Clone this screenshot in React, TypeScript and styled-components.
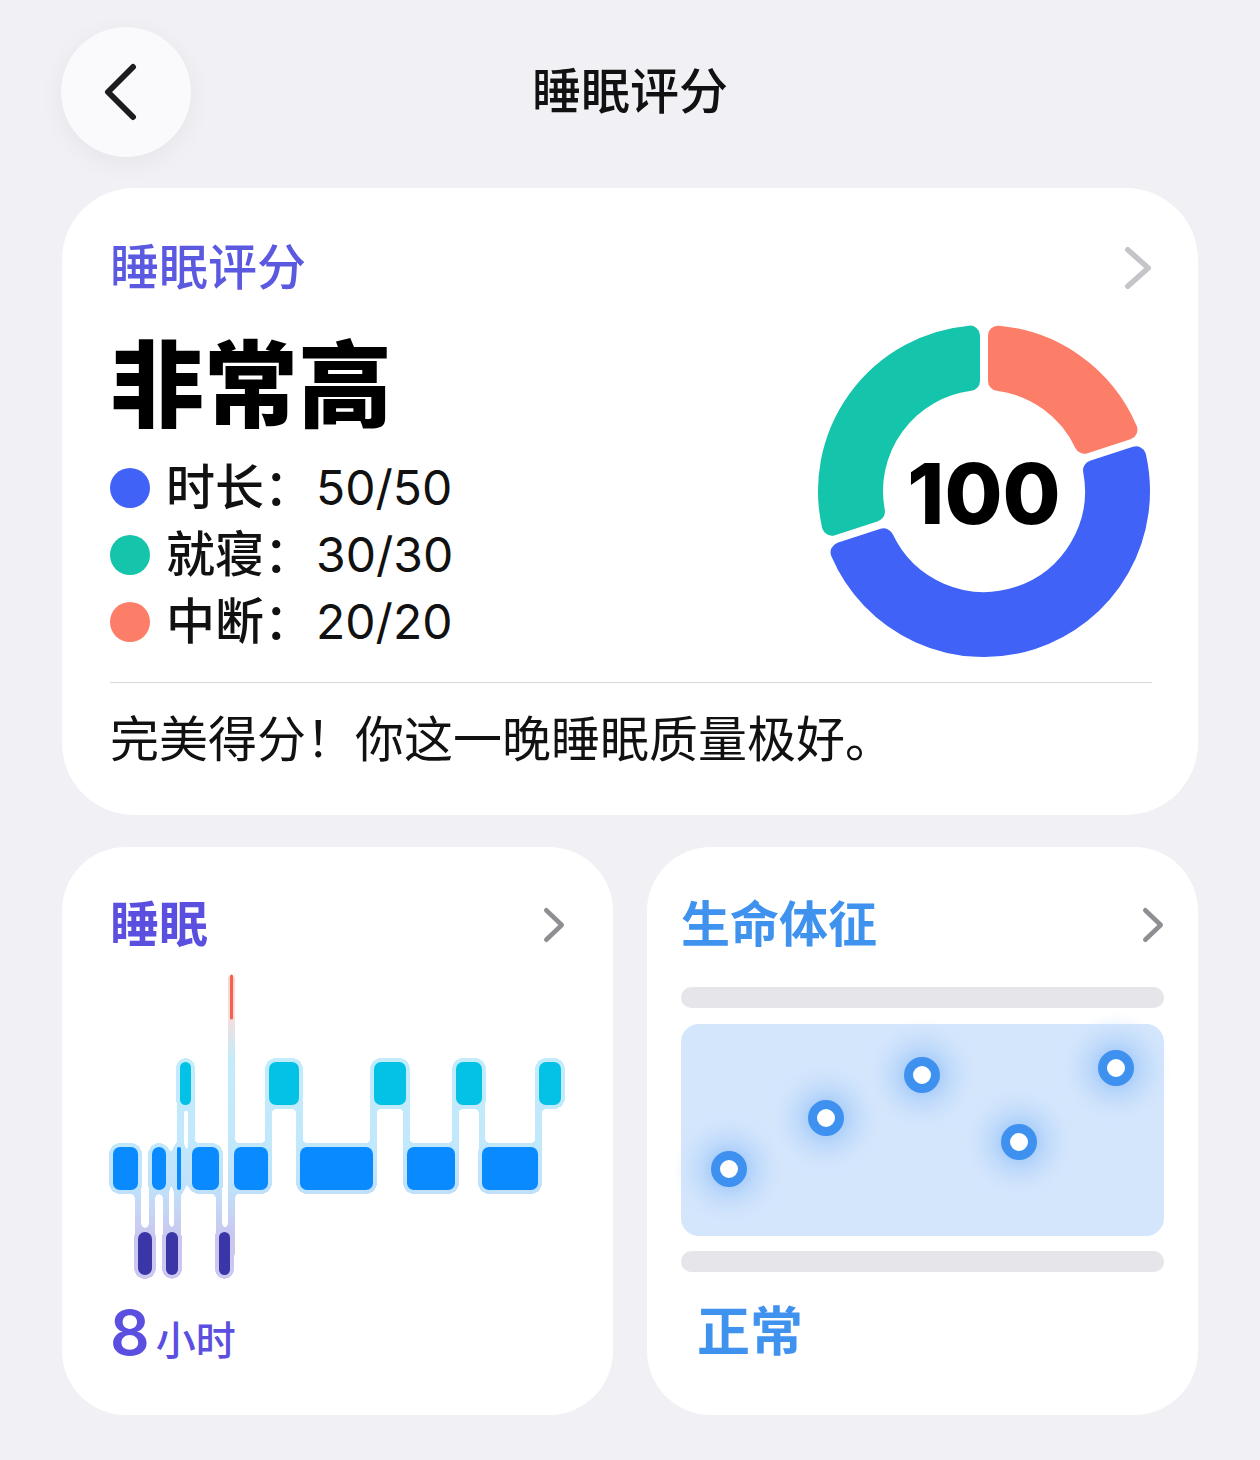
import React from 'react';
import styled, { createGlobalStyle } from 'styled-components';

const GlobalStyle = createGlobalStyle`
  html, body {
    margin: 0;
    background: #f0f0f5;
  }
  body {
    font-family: Inter, "Noto Sans CJK SC", sans-serif;
    color: #111;
    -webkit-font-smoothing: antialiased;
  }
`;

const Page = styled.div`
  width: 1260px;
  min-height: 1460px;
  box-sizing: border-box;
  padding: 27px 62px 40px;
  background: #f0f0f5;
`;

const Header = styled.header`
  display: grid;
  grid-template-columns: 130px 1fr 130px;
  align-items: center;
  height: 130px;
  margin-bottom: 31px;
`;

const BackButton = styled.button`
  width: 130px;
  height: 130px;
  margin-left: -1px;
  border: none;
  border-radius: 50%;
  background: #fafafd;
  box-shadow: 0 6px 26px rgba(0, 0, 0, 0.05);
  display: flex;
  align-items: center;
  justify-content: center;
  padding: 0;
  cursor: pointer;

  svg {
    margin-right: 11px;
  }
`;

const PageTitle = styled.h1`
  margin: 0;
  text-align: center;
  font-size: 49px;
  line-height: 58px;
  font-weight: 500;
  color: #111;
`;

const ScoreCard = styled.section`
  background: #fff;
  border-radius: 72px;
  padding: 51px 46px 46px 48px;
`;

const CardHead = styled.div`
  display: flex;
  align-items: center;
  justify-content: space-between;
  height: 58px;
`;

const CardTitle = styled.h2<{ $color: string; $weight?: number }>`
  margin: 0;
  font-size: 49px;
  line-height: 58px;
  font-weight: ${(p) => p.$weight ?? 600};
  color: ${(p) => p.$color};
`;

const ScoreBody = styled.div`
  display: flex;
  justify-content: space-between;
  align-items: flex-start;
  margin-top: 26px;
`;

const ScoreInfo = styled.div`
  margin-top: 13px;
`;

const Rating = styled.div`
  font-size: 94px;
  line-height: 100px;
  font-weight: 900;
  color: #000;
`;

const Legend = styled.ul`
  list-style: none;
  margin: 18px 0 0;
  padding: 0;
`;

const LegendRow = styled.li`
  display: flex;
  align-items: center;
  height: 67px;
`;

const Dot = styled.span<{ $color: string }>`
  width: 40px;
  height: 40px;
  border-radius: 50%;
  background: ${(p) => p.$color};
  margin-right: 16px;
  flex-shrink: 0;
`;

const LegendLabel = styled.span`
  font-size: 49px;
  line-height: 58px;
  font-weight: 500;
  color: #111;
`;

const LegendValue = styled.span`
  margin-left: 3px;
  font-size: 48px;
  line-height: 58px;
  font-weight: 400;
  color: #111;
`;

const Divider = styled.hr`
  border: none;
  height: 1px;
  background: #d9d9dc;
  margin: 23px 0 0;
`;

const Summary = styled.p`
  margin: 28px 0 0;
  font-size: 49px;
  line-height: 58px;
  font-weight: 400;
  color: #111;
`;

const TileGrid = styled.div`
  display: grid;
  grid-template-columns: 1fr 1fr;
  gap: 34px;
  margin-top: 32px;
`;

const Tile = styled.section<{ $padX: number }>`
  height: 568px;
  box-sizing: border-box;
  background: #fff;
  border-radius: 64px;
  padding: 49px ${(p) => p.$padX}px 0;
  display: flex;
  flex-direction: column;
`;

const ChartSvg = styled.svg`
  display: block;
  margin-top: 16px;
  overflow: visible;
`;

const Duration = styled.div`
  display: flex;
  align-items: baseline;
  gap: 6px;
  margin-top: 21px;
  height: 64px;
  color: #5b4fe0;
`;

const DurationNumber = styled.span`
  font-size: 62px;
  line-height: 64px;
  font-weight: 600;
`;

const DurationUnit = styled.span`
  font-size: 40px;
  font-weight: 500;
`;

const Placeholder = styled.div<{ $gap: number }>`
  height: 21px;
  border-radius: 11px;
  background: #e5e5ea;
  margin-top: ${(p) => p.$gap}px;
`;

const VitalsArea = styled.div`
  margin-top: 16px;
  height: 212px;
  border-radius: 18px;
  background: #d4e6fc;
`;

const VitalsStatus = styled.div`
  margin-top: 28px;
  padding-left: 16px;
  font-size: 53px;
  line-height: 64px;
  font-weight: 600;
  color: #3f92ee;
`;

const Chevron = ({ w, h, color, sw }: { w: number; h: number; color: string; sw: number }) => (
  <svg width={w} height={h} viewBox={`0 0 ${w} ${h}`}>
    <path
      d={`M${sw / 2 + 1} ${sw / 2 + 1} L${w - sw / 2 - 1} ${h / 2} L${sw / 2 + 1} ${h - sw / 2 - 1}`}
      fill="none"
      stroke={color}
      strokeWidth={sw}
      strokeLinecap="round"
      strokeLinejoin="round"
    />
  </svg>
);

// donut: coral 0–72°, blue 72–252°, teal 252–360°, clockwise from 12 o'clock
const RING = { cx: 168, cy: 168, outer: 166, inner: 101, gap: 4, corner: 10 };

const polar = (r: number, deg: number) => {
  const a = (deg * Math.PI) / 180;
  return [RING.cx + r * Math.sin(a), RING.cy - r * Math.cos(a)];
};

const sectorPath = (from: number, to: number) => {
  const ro = RING.outer - RING.corner;
  const ri = RING.inner + RING.corner;
  const h = RING.gap + RING.corner;
  const dOut = (Math.asin(h / ro) * 180) / Math.PI;
  const dIn = (Math.asin(h / ri) * 180) / Math.PI;
  const [x1, y1] = polar(ro, from + dOut);
  const [x2, y2] = polar(ro, to - dOut);
  const [x3, y3] = polar(ri, to - dIn);
  const [x4, y4] = polar(ri, from + dIn);
  const large = to - from > 180 ? 1 : 0;
  return `M${x1} ${y1} A${ro} ${ro} 0 ${large} 1 ${x2} ${y2} L${x3} ${y3} A${ri} ${ri} 0 ${large} 0 ${x4} ${y4} Z`;
};

const scoreParts = [
  { label: '时长', value: '50/50', color: '#4062f6', from: 72, to: 252 },
  { label: '就寝', value: '30/30', color: '#14c4ab', from: 252, to: 360 },
  { label: '中断', value: '20/20', color: '#fc7e69', from: 0, to: 72 },
];

const ScoreRing = () => (
  <svg width={336} height={336} viewBox="0 0 336 336">
    {scoreParts.map((p) => (
      <path
        key={p.label}
        d={sectorPath(p.from, p.to)}
        fill={p.color}
        stroke={p.color}
        strokeWidth={RING.corner * 2}
        strokeLinejoin="round"
      />
    ))}
    <text
      x={168}
      y={170}
      textAnchor="middle"
      dominantBaseline="central"
      fontFamily="Inter, sans-serif"
      fontWeight={800}
      fontSize={84}
      fill="#000"
    >
      100
    </text>
  </svg>
);

type Stage = 'rem' | 'core' | 'deep';

const STAGE_TOP: Record<Stage, number> = { rem: 1062, core: 1147, deep: 1232 };
const STAGE_FILL: Record<Stage, string> = { rem: '#04c2e6', core: '#0a8aff', deep: '#3a36a8' };
const BLOCK_H = 43;

const segments: [Stage, number, number][] = [
  ['core', 113, 138],
  ['deep', 138, 152],
  ['core', 152, 166],
  ['deep', 166, 178],
  ['core', 177, 181],
  ['rem', 180, 191],
  ['core', 192, 219],
  ['deep', 219, 230],
  ['core', 234, 268],
  ['rem', 269, 299],
  ['core', 300, 373],
  ['rem', 374, 406],
  ['core', 407, 455],
  ['rem', 456, 482],
  ['core', 482, 538],
  ['rem', 539, 561],
];

const AWAKE_X = 231.5;
const AWAKE_TOP = 976;

const mid = (s: Stage) => STAGE_TOP[s] + BLOCK_H / 2;

const SleepChart = () => (
  <ChartSvg width={455} height={310} viewBox="110 970 455 310">
    <defs>
      <linearGradient id="halo" gradientUnits="userSpaceOnUse" x1="0" y1="975" x2="0" y2="1280">
        <stop offset="0" stopColor="#fcd3ce" />
        <stop offset="0.12" stopColor="#fbdcdc" />
        <stop offset="0.28" stopColor="#c3ecfb" />
        <stop offset="0.55" stopColor="#c1e8fb" />
        <stop offset="0.7" stopColor="#c0e1fb" />
        <stop offset="0.86" stopColor="#cac6ef" />
        <stop offset="1" stopColor="#ccc8f0" />
      </linearGradient>
      <filter
        id="goo"
        filterUnits="userSpaceOnUse"
        x="100"
        y="960"
        width="475"
        height="330"
        colorInterpolationFilters="sRGB"
      >
        <feGaussianBlur in="SourceGraphic" stdDeviation="2.6" />
        <feColorMatrix values="1 0 0 0 0  0 1 0 0 0  0 0 1 0 0  0 0 0 22 -10" />
      </filter>
    </defs>

    <g filter="url(#goo)" fill="url(#halo)">
      {segments.map(([stage, x0, x1], i) => (
        <rect
          key={`h${i}`}
          x={x0 - 4}
          y={STAGE_TOP[stage] - 4}
          width={x1 - x0 + 8}
          height={BLOCK_H + 8}
          rx={Math.min(11, (x1 - x0 + 8) / 2)}
        />
      ))}
      {segments.slice(1).map(([stage, x0], i) => {
        const [prev, , px1] = segments[i];
        const b = (px1 + x0) / 2;
        const top = Math.min(mid(prev), mid(stage));
        return (
          <rect key={`c${i}`} x={b - 3} y={top} width={6} height={Math.abs(mid(prev) - mid(stage))} />
        );
      })}
      <rect x={AWAKE_X - 3.5} y={AWAKE_TOP - 2} width={7} height={mid('deep') - AWAKE_TOP} rx={3.5} />
    </g>

    {segments.map(([stage, x0, x1], i) => (
      <rect
        key={`b${i}`}
        x={x0}
        y={STAGE_TOP[stage]}
        width={x1 - x0}
        height={BLOCK_H}
        rx={Math.min(7, (x1 - x0) / 2)}
        fill={STAGE_FILL[stage]}
      />
    ))}
    <line
      x1={AWAKE_X}
      y1={AWAKE_TOP}
      x2={AWAKE_X}
      y2={1018}
      stroke="#f2634f"
      strokeWidth={3}
      strokeLinecap="round"
    />
  </ChartSvg>
);

const readings = [
  [729, 1169],
  [826, 1118],
  [922, 1075],
  [1019, 1142],
  [1116, 1068],
];

const VitalsChart = () => (
  <VitalsArea>
    <svg width="100%" height={212} viewBox="681 1024 483 212" overflow="visible">
      <defs>
        <radialGradient id="dotGlow">
          <stop offset="0" stopColor="#6eaaf5" stopOpacity="0.85" />
          <stop offset="0.45" stopColor="#9cc6f8" stopOpacity="0.45" />
          <stop offset="1" stopColor="#c9e0fb" stopOpacity="0" />
        </radialGradient>
      </defs>
      {readings.map(([x, y]) => (
        <circle key={`g${x}`} cx={x} cy={y} r={56} fill="url(#dotGlow)" />
      ))}
      {readings.map(([x, y]) => (
        <circle key={`d${x}`} cx={x} cy={y} r={13.5} fill="#fff" stroke="#3f91f0" strokeWidth={9} />
      ))}
    </svg>
  </VitalsArea>
);

export default function App() {
  return (
    <Page>
      <GlobalStyle />
      <Header>
        <BackButton aria-label="返回">
          <svg width={36} height={58} viewBox="0 0 36 58">
            <path
              d="M30 4 L5 29 L30 54"
              fill="none"
              stroke="#1c1c1e"
              strokeWidth={6}
              strokeLinecap="round"
              strokeLinejoin="round"
            />
          </svg>
        </BackButton>
        <PageTitle>睡眠评分</PageTitle>
        <span />
      </Header>

      <ScoreCard>
        <CardHead>
          <CardTitle $color="#5a59e0" $weight={500}>
            睡眠评分
          </CardTitle>
          <Chevron w={28} h={44} color="#c5c5c9" sw={5.5} />
        </CardHead>
        <ScoreBody>
          <ScoreInfo>
            <Rating>非常高</Rating>
            <Legend>
              {scoreParts.map((p) => (
                <LegendRow key={p.label}>
                  <Dot $color={p.color} />
                  <LegendLabel>{p.label}：</LegendLabel>
                  <LegendValue>{p.value}</LegendValue>
                </LegendRow>
              ))}
            </Legend>
          </ScoreInfo>
          <ScoreRing />
        </ScoreBody>
        <Divider />
        <Summary>完美得分！你这一晚睡眠质量极好。</Summary>
      </ScoreCard>

      <TileGrid>
        <Tile $padX={48}>
          <CardHead>
            <CardTitle $color="#5b4fe0">睡眠</CardTitle>
            <Chevron w={22} h={36} color="#8e8e93" sw={4.5} />
          </CardHead>
          <SleepChart />
          <Duration>
            <DurationNumber>8</DurationNumber>
            <DurationUnit>小时</DurationUnit>
          </Duration>
        </Tile>

        <Tile $padX={34}>
          <CardHead>
            <CardTitle $color="#3f92ee">生命体征</CardTitle>
            <Chevron w={22} h={36} color="#8e8e93" sw={4.5} />
          </CardHead>
          <Placeholder $gap={33} />
          <VitalsChart />
          <Placeholder $gap={15} />
          <VitalsStatus>正常</VitalsStatus>
        </Tile>
      </TileGrid>
    </Page>
  );
}
